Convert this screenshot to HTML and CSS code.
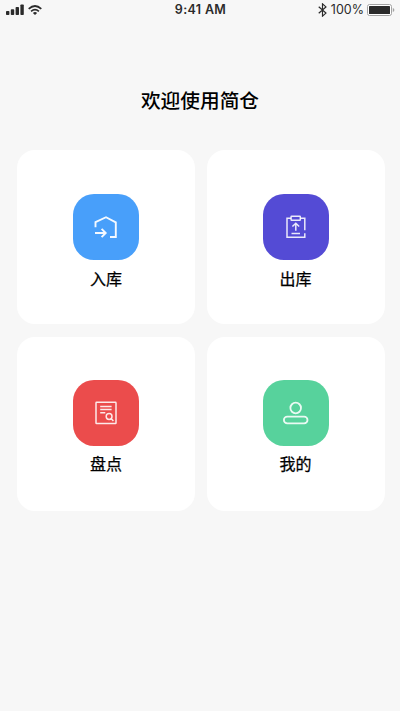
FILE: index.html
```html
<!DOCTYPE html>
<html lang="zh-CN">
<head>
<meta charset="utf-8">
<meta name="viewport" content="width=device-width, initial-scale=1">
<title>简仓</title>
<link rel="stylesheet" href="styles.css">
</head>
<body>
<header class="status">
  <div class="status-left">
    <svg class="signal" viewBox="0 0 18 12" fill="currentColor"><rect x="0" y="7" width="3.4" height="4" rx=".8"/><rect x="4.8" y="5.2" width="3.4" height="5.8" rx=".8"/><rect x="9.6" y="3" width="3.4" height="8" rx=".8"/><rect x="14.4" y=".4" width="3.4" height="10.6" rx=".8"/></svg>
    <svg class="wifi" viewBox="0 0 14 10" fill="none" stroke="currentColor" stroke-width="1.7"><path d="M.7 3.9Q7-1.9 13.3 3.9M3.1 6.3Q7 2.9 10.9 6.3"/><path d="M4.9 7.9Q7 6.3 9.1 7.9L7 10Z" fill="currentColor" stroke="none"/></svg>
  </div>
  <div class="time">9:41 AM</div>
  <div class="status-right">
    <svg class="bluetooth" viewBox="0 0 8 13" fill="none" stroke="currentColor" stroke-width="1.1"><path d="M.5 3.5 7.2 9.4 4 12.2V.8L7.2 3.6.5 9.5"/></svg>
    <span class="percent">100%</span>
    <svg class="battery" viewBox="0 0 28 12"><rect x=".5" y=".5" width="24" height="11" rx="2" fill="#fff" stroke="#a3a3a3"/><rect x="2" y="2" width="21" height="8" rx=".6" fill="#2b2b2b"/><path d="M25.8 4Q27.4 4.4 27.4 6T25.8 8Z" fill="#a3a3a3"/></svg>
  </div>
</header>
<h1 class="title">欢迎使用简仓</h1>
<main class="grid">
  <a class="card">
    <svg class="tile blue" viewBox="0 0 66 66"><path d="M22.5 33.2V28.2L33 23.2 42.8 28.4V43H37M22 39H32.6M28.6 34.9 32.7 39 28.6 43.1"/></svg>
    <span class="label">入库</span>
  </a>
  <a class="card">
    <svg class="tile purple" viewBox="0 0 66 66"><path d="M28 24.2H24V43.2H41.8V39.2M41.8 36.2V24.2H37.4"/><rect x="28.1" y="22.2" width="9.2" height="4" rx=".5"/><path d="M32.8 36.8V29.3M29.4 32.5 32.8 29.2 36.2 32.5M28.5 39.4H37"/></svg>
    <span class="label">出库</span>
  </a>
  <a class="card">
    <svg class="tile red" viewBox="0 0 66 66"><rect x="23" y="22.3" width="20" height="21.2" rx=".6"/><path d="M27.2 26.4H38.6M27.2 29.5H38.6M27.2 32.8H32.3M38.3 38.7 40.4 41"/><circle cx="36.1" cy="36.5" r="2.9"/></svg>
    <span class="label">盘点</span>
  </a>
  <a class="card">
    <svg class="tile green" viewBox="0 0 66 66"><circle cx="32.7" cy="28" r="5.3"/><rect x="20.9" y="36.7" width="23.6" height="6.7" rx="3.35"/></svg>
    <span class="label">我的</span>
  </a>
</main>
</body>
</html>
```
FILE: styles.css
```css
* { box-sizing: border-box; }
body {
  margin: 0;
  min-height: 711px;
  background: #f7f7f7;
  color: #000;
  font-family: "Noto Sans CJK SC", sans-serif;
}
svg { display: block; flex: none; }
.status {
  display: grid;
  grid-template-columns: 1fr auto 1fr;
  align-items: center;
  height: 20px;
  padding: 0 5px 0 6px;
  color: #2b2b2b;
  font-family: Inter, sans-serif;
  font-size: 12px;
  line-height: 20px;
}
.status-left, .status-right { display: flex; align-items: center; }
.status-left { gap: 4px; }
.status-right { justify-content: flex-end; }
.signal { width: 18px; height: 12px; }
.wifi { width: 14px; height: 10px; }
.time { font-size: 12.5px; font-weight: 600; letter-spacing: .35px; }
.bluetooth { width: 9px; height: 14px; margin-right: 4px; }
.percent { font-size: 12.5px; margin-right: 3px; }
.battery { width: 28px; height: 12px; }
.title {
  margin: 65px 0 35px;
  font-size: 19.7px;
  font-weight: 500;
  line-height: 30px;
  text-align: center;
}
.grid {
  display: grid;
  grid-template-columns: 178px 178px;
  grid-template-rows: 173.5px 174px;
  gap: 13.5px 11.5px;
  padding-left: 17px;
}
.card {
  display: flex;
  flex-direction: column;
  align-items: center;
  padding-top: 44px;
  border-radius: 18px;
  background: #fff;
}
.card:nth-child(n+3) { padding-top: 43px; }
.tile {
  width: 66px;
  height: 66px;
  border-radius: 21px;
  fill: none;
  stroke: #fff;
  stroke-opacity: .88;
  stroke-width: 1.5;
}
.blue { background: #489ffa; stroke-width: 1.9; stroke-opacity: .94; }
.purple { background: #544bd5; }
.red { background: #eb4c4c; }
.green { background: #57d29c; stroke-width: 1.8; }
.label {
  margin-top: 6px;
  font-size: 16px;
  font-weight: 400;
  line-height: 24px;
  -webkit-text-stroke: .25px #000;
}
.card:nth-child(n+3) .label { margin-top: 5px; }
```
